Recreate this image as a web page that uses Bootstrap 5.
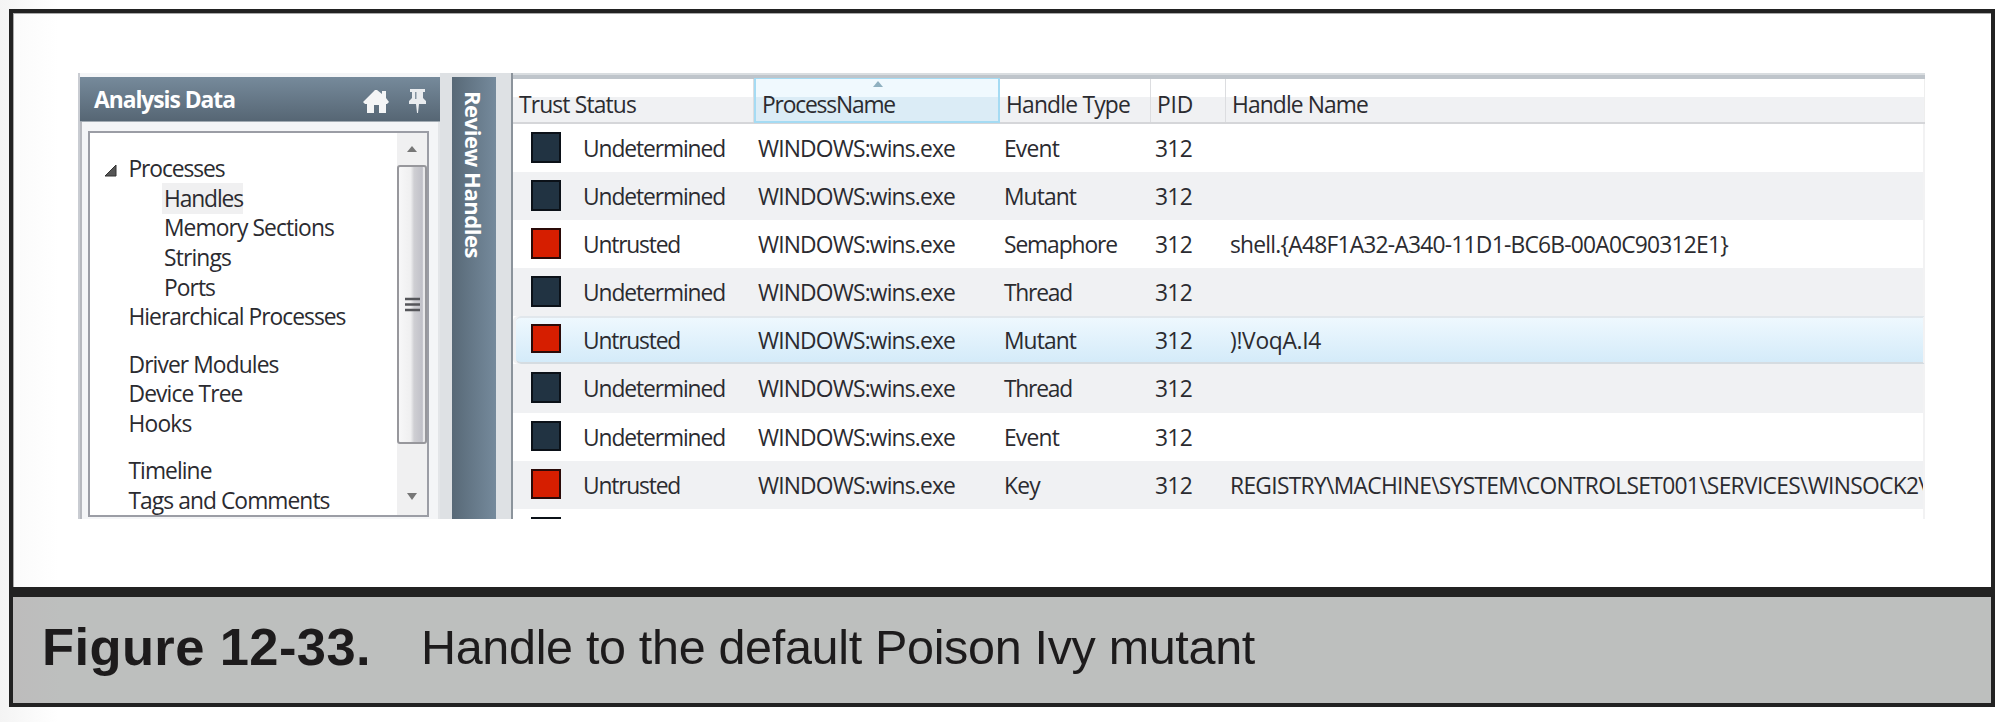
<!DOCTYPE html>
<html lang="en">
<head>
<meta charset="utf-8">
<title>Figure 12-33</title>
<link href="https://cdn.jsdelivr.net/npm/bootstrap@5.3.0/dist/css/bootstrap.min.css" rel="stylesheet">
<script src="https://cdn.jsdelivr.net/npm/bootstrap@5.3.0/dist/js/bootstrap.bundle.min.js"></script>
<style>
body{width:2000px;height:722px;background:#fff;font-family:"Open Sans","Noto Sans",sans-serif;font-size:22.8px;color:#2b2b30}
.page{width:2000px;height:722px;padding:9px 5px 15px 9px;background:linear-gradient(90deg,#f4f4f4 0,#fff 58px)}
.figure-frame{border:4px solid #222;height:698px;box-shadow:inset 0 0 0 1px #999}
.shot-area{height:574px;padding:60px 66px 0 65px;background:linear-gradient(90deg,#fafafa 0,#fff 45px);box-shadow:inset 1px 1px #aaa}
.fit{white-space:pre;display:inline-block}
.shot{height:446px;background:#dee1e4}
.side{width:362px;padding-top:4px;background:#f4f5f7;border-left:2px solid #c9ccd2}
.side-head{height:45px;background:linear-gradient(#768a9b,#566674);border-bottom:1px solid #a2abb3;color:#fff;font-weight:700;padding:3px 14px 0 14px}
.side-body{height:397px;padding:9px 9px 2px 6px;border-left:2px solid #b6b8be;border-right:2px solid #e3e5e8}
.tree-box{height:386px;border:2px solid #9b9da5;background:#fff}
.tree{padding-top:21px;height:382px;line-height:29.7px}
.tree>div{height:29.7px;padding-left:38.5px}
.tree>.sub{padding-left:74px}
.tree>.gap{height:17.6px}
.hl{background:#f0f0f1;box-shadow:-1px 0 0 1px #f0f0f1}
.scroll{width:30px;background:#f0f0f1}
.sbtn{height:32px}
.thumb{height:279px;border:2px solid #97979c;border-radius:3px;background:linear-gradient(90deg,#f7f7f8 0,#efeff0 45%,#cfcfd3 58%,#c0c0c8 90%,#e8e8ea 92%)}
.vbar{width:44px;margin:4px 0 0 12px;padding-top:14px;background:linear-gradient(90deg,#586977,#758a9c)}
.vtext{writing-mode:vertical-rl;color:#fff;font-weight:700;font-size:22px;line-height:44px}
.grid-box{margin-left:15px;border-left:2px solid #8b939b;background:#fff}
.topline{height:6px;background:linear-gradient(#d9dde0 0,#d9dde0 35%,#bfc5cb 36%)}
.cols{display:grid;grid-template-columns:241px 246px 151px 75px 1fr}
.heads{height:45px;background:linear-gradient(#fff 0,#fff 18px,#f0f1f3 18px);border-bottom:2px solid #d5d6d9;line-height:43px}
.heads>div{padding:4px 0 0 6px;height:43px;border-right:1.5px solid #dcdde0}
.heads>div:last-child{border-color:#eee}
.heads>.sorted{height:45px;padding-left:6px;margin-top:-1px;padding-top:4px;border:2px solid #a5dbf3;border-top-width:1px;background:linear-gradient(#f0f9fe 0,#f0f9fe 18px,#dbecf6 18px)}
.tri{left:117px;top:2px}
.line{height:48.1px;line-height:50px;border-right:2px solid #f2f2f3;flex:none}
.line>div{padding-left:4px;height:48px;overflow:hidden}
.line.alt{background:#f0f1f3}
.line.sel{border-top:2px solid #e1e7ec;border-bottom:2px solid #d5dce1;border-radius:5px 0 0 5px;background:linear-gradient(#eef8fe,#d4ebf9);line-height:46px;box-shadow:-3px 0 #f0f1f3}
.line.sel{margin-left:3px;grid-template-columns:238px 246px 151px 75px 1fr}
.line.sel>div{height:44px}
.line.sel>div:not(:first-child){padding-left:4px}
.line.sel .sq{margin-left:15px}
.line>div:first-child{padding:0}
.sq{width:30px;height:30.5px;background:#213342;border:2px solid #0b1118;margin:8px 22px 0 18px;flex:none}
.sel .sq{margin-top:6px;height:28.5px}
.sq.bad{background:#d61e00;border-color:#2a0a08}
.caption-bar{height:116px;border-top:10px solid #222;background:linear-gradient(90deg,#bdbcbc 0,#bdbfbe 48px);font-family:"Liberation Sans",Arial,sans-serif;color:#1d1b1c;padding:0 0 6px 29px}
.fig-no{font-size:52.5px;font-weight:700;line-height:60px}
.fig-t{font-size:48.5px;line-height:60px;margin-left:50px}
</style>
</head>
<body>
<main class="page">
<figure class="figure-frame m-0">
<div class="shot-area">
 <div class="shot d-flex overflow-hidden">
  <aside class="side flex-shrink-0">
   <div class="side-head d-flex align-items-center">
    <span class="fit me-auto" data-w="141">Analysis Data</span>
    <svg width="26" height="24" viewBox="0 0 26 24" fill="#f4f5f6"><path d="M12 1h2l5 4V2h4v7l3 4-2 2h-1v9h-7v-8h-5v8H4v-9H2l-2-2z"/></svg>
    <svg style="margin-left:20px" width="17" height="24" viewBox="0 0 17 24" fill="#e9ecef"><path d="M1 0h15v3h-2v6l3 3v3h-7l-1 9H8l-1-9H0v-3l3-3V3H1z"/><path d="M6 3h1.500v7H6z" fill="#8594a1"/></svg>
   </div>
   <div class="side-body">
    <div class="tree-box d-flex overflow-hidden">
     <div class="tree flex-grow-1 overflow-hidden">
      <div class="position-relative"><svg class="position-absolute" style="left:14px;top:10px" width="13" height="13"><path d="M12 1v11H1z" fill="#555" stroke="#333"/></svg><span class="fit" data-w="96">Processes</span></div>
      <div class="sub"><span class="fit hl" data-w="79">Handles</span></div>
      <div class="sub"><span class="fit" data-w="170">Memory Sections</span></div>
      <div class="sub"><span class="fit" data-w="67">Strings</span></div>
      <div class="sub"><span class="fit" data-w="51">Ports</span></div>
      <div><span class="fit" data-w="217">Hierarchical Processes</span></div>
      <div class="gap"></div>
      <div><span class="fit" data-w="150">Driver Modules</span></div>
      <div><span class="fit" data-w="114">Device Tree</span></div>
      <div><span class="fit" data-w="63">Hooks</span></div>
      <div class="gap"></div>
      <div><span class="fit" data-w="83">Timeline</span></div>
      <div><span class="fit" data-w="201">Tags and Comments</span></div>
     </div>
     <div class="scroll flex-shrink-0">
      <div class="sbtn d-flex align-items-center justify-content-center"><svg width="12" height="9"><path d="M1 7 6 1l5 6z" fill="#777"/></svg></div>
      <div class="thumb d-flex align-items-center justify-content-center"><svg width="15" height="16"><path d="M0 2h15M0 7.500h15M0 13h15" stroke="#55565a" stroke-width="2.500"/></svg></div>
      <div class="pt-5 text-center lh-1"><svg class="d-block mx-auto" width="12" height="9"><path d="M1 1h10L6 8z" fill="#777"/></svg></div>
     </div>
    </div>
   </div>
  </aside>
  <div class="vbar flex-shrink-0"><span class="fit vtext" data-h="167">Review Handles</span></div>
  <section class="grid-box flex-grow-1 overflow-hidden d-flex flex-column">
   <div class="topline flex-shrink-0"></div>
   <div class="heads cols flex-shrink-0">
    <div><span class="fit" data-w="117">Trust Status</span></div>
    <div class="sorted position-relative"><svg class="tri position-absolute" width="10" height="6"><path d="M0 6 5 0l5 6z" fill="#8fb0c0"/></svg><span class="fit" data-w="133">ProcessName</span></div>
    <div><span class="fit" data-w="124">Handle Type</span></div>
    <div><span class="fit" data-w="36">PID</span></div>
    <div><span class="fit" data-w="136">Handle Name</span></div>
   </div>
   <div id="lines" class="d-flex flex-column"></div>
  </section>
 </div>
</div>
<figcaption class="caption-bar d-flex align-items-center">
 <span class="fig-no fit" data-w="329">Figure 12-33.</span>
 <span class="fig-t fit" data-w="834">Handle to the default Poison Ivy mutant</span>
</figcaption>
</figure>
</main>
<script>
const rows = [
 [0,'Event',''],[0,'Mutant',''],[1,'Semaphore','shell.{A48F1A32-A340-11D1-BC6B-00A0C90312E1}',498],
 [0,'Thread',''],[1,'Mutant',')!VoqA.I4',91],[0,'Thread',''],[0,'Event',''],
 [1,'Key','REGISTRY\\MACHINE\\SYSTEM\\CONTROLSET001\\SERVICES\\WINSOCK2\\',696]
];
const typeWidth = {Event:55,Mutant:72,Semaphore:113,Thread:68,Key:36};
document.getElementById('lines').innerHTML = rows.map(([bad,type,name,w],i) => `
 <div class="line cols ${i===4?'sel':i%2?'alt':''}">
  <div class="d-flex"><i class="sq ${bad?'bad':''}"></i><span class="fit" data-w="${bad?97:142}">${bad?'Untrusted':'Undetermined'}</span></div>
  <div><span class="fit" data-w="197">WINDOWS:wins.exe</span></div>
  <div><span class="fit" data-w="${typeWidth[type]}">${type}</span></div>
  <div><span class="fit" data-w="37">312</span></div>
  <div>${name?`<span class="fit" data-w="${w}">${name}</span>`:''}</div>
 </div>`).join('') + '<div class="line"><i class="sq d-block"></i></div>';
// Track each label so that it fills its measured length.
document.querySelectorAll('.fit').forEach(el => {
  const r = el.getBoundingClientRect(), n = el.textContent.length;
  const d = el.dataset.h ? el.dataset.h - r.height : el.dataset.w - r.width;
  el.style.letterSpacing = (d / n).toFixed(3) + 'px';
});
</script>
</body>
</html>
